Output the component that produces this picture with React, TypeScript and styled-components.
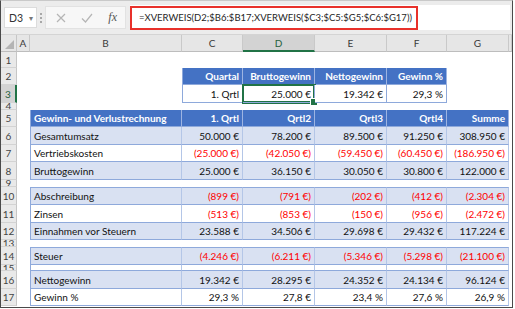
import { ReactElement } from "react";
import styled, { createGlobalStyle } from "styled-components";

type Tone = "head" | "band" | "plain";

type PlRow = {
  n: number;
  label: string;
  tone: Tone;
  values: string[];
  top?: boolean;
};

const COLUMNS = ["A", "B", "C", "D", "E", "F", "G"];
const ROW_HEIGHTS = [17, 16, 17, 18, 7, 17, 18, 17, 18, 7, 18, 18, 17, 7, 18, 6, 18, 17];
const FORMULA = "=XVERWEIS(D2;$B6:$B17;XVERWEIS($C3;$C5:$G5;$C6:$G17))";

const LOOKUP_HEAD = ["Quartal", "Bruttogewinn", "Nettogewinn", "Gewinn %"];
const LOOKUP_VALUES = ["1. Qrtl", "25.000 €", "19.342 €", "29,3 %"];

const PL_HEAD = ["Gewinn- und Verlustrechnung", "1. Qrtl", "Qrtl2", "Qrtl3", "Qrtl4", "Summe"];

// blank rows (4, 9, 13) are rendered as gaps between these
const PL_ROWS: PlRow[] = [
  { n: 6, label: "Gesamtumsatz", tone: "band", values: ["50.000 €", "78.200 €", "89.500 €", "91.250 €", "308.950 €"] },
  { n: 7, label: "Vertriebskosten", tone: "plain", values: ["(25.000 €)", "(42.050 €)", "(59.450 €)", "(60.450 €)", "(186.950 €)"] },
  { n: 8, label: "Bruttogewinn", tone: "band", values: ["25.000 €", "36.150 €", "30.050 €", "30.800 €", "122.000 €"] },
  { n: 10, label: "Abschreibung", tone: "band", top: true, values: ["(899 €)", "(791 €)", "(202 €)", "(412 €)", "(2.304 €)"] },
  { n: 11, label: "Zinsen", tone: "plain", values: ["(513 €)", "(853 €)", "(150 €)", "(956 €)", "(2.472 €)"] },
  { n: 12, label: "Einnahmen vor Steuern", tone: "band", values: ["23.588 €", "34.506 €", "29.698 €", "29.432 €", "117.224 €"] },
  { n: 14, label: "Steuer", tone: "band", top: true, values: ["(4.246 €)", "(6.211 €)", "(5.346 €)", "(5.298 €)", "(21.100 €)"] },
  { n: 15, label: "", tone: "plain", values: ["", "", "", "", ""] },
  { n: 16, label: "Nettogewinn", tone: "band", values: ["19.342 €", "28.295 €", "24.352 €", "24.134 €", "96.124 €"] },
  { n: 17, label: "Gewinn %", tone: "plain", values: ["29,3 %", "27,8 €", "23,4 %", "27,6 %", "26,9 %"] },
];

const GAP_BEFORE: Record<number, number> = { 10: 9, 14: 13 };

export default function App(): ReactElement {
  return (
    <>
      <GlobalStyle />
      <Frame>
        <FormulaBar>
          <NameBox>
            D3
            <Caret>▾</Caret>
          </NameBox>
          <Grip />
          <FxBox>
            <svg width="10" height="10" viewBox="0 0 10 10">
              <path d="M1 1 L9 9 M9 1 L1 9" stroke="#b5b5b5" strokeWidth="1.2" fill="none" />
            </svg>
            <svg width="12" height="10" viewBox="0 0 12 10">
              <path d="M1 5.5 L4.5 9 L11 1" stroke="#b5b5b5" strokeWidth="1.2" fill="none" />
            </svg>
            <Fx>fx</Fx>
          </FxBox>
          <FormulaInput>
            <Highlight>{FORMULA}</Highlight>
          </FormulaInput>
        </FormulaBar>

        <Sheet>
          <Corner />
          {COLUMNS.map((c) => (
            <ColHead key={c} $active={c === "D"}>
              {c}
            </ColHead>
          ))}
          <ColHead $active={false} />

          <RowHead $active={false}>1</RowHead>
          <Blank $from={2} />

          <RowHead $active={false}>2</RowHead>
          <Blank $from={2} $to={4} />
          {LOOKUP_HEAD.map((h, i) => (
            <Cell key={h} $tone="head" $align="right" $first={i === 0}>
              {h}
            </Cell>
          ))}
          <Blank $from={8} />

          <RowHead $active>3</RowHead>
          <Blank $from={2} $to={4} />
          {LOOKUP_VALUES.map((v, i) => (
            <LookupCell key={v} $selected={i === 1} $first={i === 0}>
              {v}
            </LookupCell>
          ))}
          <Blank $from={8} />

          <RowHead $active={false}>4</RowHead>
          <Blank $from={2} />

          <RowHead $active={false}>5</RowHead>
          <Blank $from={2} $to={3} />
          {PL_HEAD.map((h, i) => (
            <Cell key={h} $tone="head" $align={i === 0 ? "left" : "right"} $first={i === 0}>
              {h}
            </Cell>
          ))}
          <Blank $from={9} />

          {PL_ROWS.map((row) => (
            <PlLine key={row.n} row={row} />
          ))}
        </Sheet>
      </Frame>
    </>
  );
}

function PlLine({ row }: { row: PlRow }): ReactElement {
  const gap = GAP_BEFORE[row.n];
  return (
    <>
      {gap && (
        <>
          <RowHead $active={false}>{gap}</RowHead>
          <Blank $from={2} />
        </>
      )}
      <RowHead $active={false}>{row.n}</RowHead>
      <Blank $from={2} $to={3} />
      <Cell $tone={row.tone} $align="left" $first $top={row.top}>
        {row.label}
      </Cell>
      {row.values.map((v, i) => (
        <Cell key={i} $tone={row.tone} $align="right" $neg={v.startsWith("(")} $top={row.top}>
          {v}
        </Cell>
      ))}
      <Blank $from={9} />
    </>
  );
}

const GlobalStyle = createGlobalStyle`
  * { box-sizing: border-box; }
  body {
    margin: 0;
    background: #ffffff;
    font-family: Lato, "Open Sans", sans-serif;
  }
`;

const Frame = styled.div`
  width: 513px;
  height: 308px;
  overflow: hidden;
  border: 1px solid #4a4a4a;
  border-top-color: #c9c9c9;
  background: #ffffff;
`;

const FormulaBar = styled.div`
  height: 34px;
  display: flex;
  align-items: center;
  padding: 0 2px 0 3px;
  background: #ececec;
  border-bottom: 1px solid #d4d4d4;
`;

const NameBox = styled.div`
  width: 33px;
  height: 21px;
  display: flex;
  align-items: center;
  justify-content: space-between;
  padding: 0 3px 0 4px;
  background: #ffffff;
  border: 1px solid #dcdcdc;
  font-size: 10.5px;
  color: #333333;
`;

const Caret = styled.span`
  font-size: 8px;
  color: #777777;
`;

const Grip = styled.span`
  width: 2px;
  height: 2px;
  margin: -8px 3px 0 3px;
  background: #a8a8a8;
  box-shadow: 0 4px #a8a8a8, 0 8px #a8a8a8;
`;

const FxBox = styled.div`
  width: 81px;
  height: 23px;
  display: flex;
  align-items: center;
  justify-content: space-between;
  padding: 0 8px 0 10px;
  background: #f7f7f7;
  border: 1px solid #e2e2e2;
`;

const Fx = styled.span`
  font-family: "Liberation Serif", serif;
  font-style: italic;
  font-size: 12px;
  color: #555555;
`;

const FormulaInput = styled.div`
  flex: 1;
  height: 25px;
  margin-left: 4px;
  display: flex;
  align-items: center;
  background: #ffffff;
`;

const Highlight = styled.div`
  width: 288px;
  height: 24px;
  display: flex;
  align-items: center;
  padding: 0 6px 0 7px;
  border: 2px solid #e8312b;
  font-size: 9.5px;
  color: #1e1e1e;
  white-space: nowrap;
`;

const Sheet = styled.div`
  display: grid;
  grid-template-columns: 16px 13px 152px 61px 72px 72px 60px 62px 3px;
  grid-template-rows: ${ROW_HEIGHTS.map((h) => `${h}px`).join(" ")};
  font-size: 10px;
`;

const Corner = styled.div`
  position: relative;
  background: #e6e6e6;
  border-right: 1px solid #c6c6c6;
  border-bottom: 1px solid #bdbdbd;

  &::after {
    content: "";
    position: absolute;
    right: 2px;
    bottom: 2px;
    border-style: solid;
    border-width: 0 0 9px 9px;
    border-color: transparent transparent #b4b4b4 transparent;
  }
`;

const ColHead = styled.div<{ $active: boolean }>`
  display: flex;
  align-items: center;
  justify-content: center;
  background: ${(p) => (p.$active ? "#d3d3d3" : "#e6e6e6")};
  border-right: 1px solid #c9c9c9;
  border-bottom: ${(p) => (p.$active ? "2px solid #217346" : "1px solid #bdbdbd")};
  font-size: 10px;
  color: ${(p) => (p.$active ? "#1f5f3c" : "#3a3a3a")};
`;

const RowHead = styled.div<{ $active: boolean }>`
  display: flex;
  align-items: center;
  justify-content: center;
  overflow: hidden;
  background: ${(p) => (p.$active ? "#d3d3d3" : "#e9e9e9")};
  border-right: ${(p) => (p.$active ? "2px solid #217346" : "1px solid #c6c6c6")};
  border-bottom: 1px solid #d3d3d3;
  font-size: 10px;
  color: ${(p) => (p.$active ? "#1f5f3c" : "#444444")};
`;

const Blank = styled.div<{ $from: number; $to?: number }>`
  grid-column: ${(p) => `${p.$from} / ${p.$to ?? -1}`};
`;

const Cell = styled.div<{
  $tone: Tone;
  $align: "left" | "right";
  $neg?: boolean;
  $first?: boolean;
  $top?: boolean;
}>`
  display: flex;
  align-items: center;
  justify-content: ${(p) => (p.$align === "left" ? "flex-start" : "flex-end")};
  padding: 0 3px;
  overflow: hidden;
  white-space: nowrap;
  background: ${(p) => (p.$tone === "head" ? "#4472c4" : p.$tone === "band" ? "#d9e1f2" : "#ffffff")};
  color: ${(p) => (p.$tone === "head" ? "#ffffff" : p.$neg ? "#ff0000" : "#111111")};
  font-weight: ${(p) => (p.$tone === "head" ? 700 : 400)};
  border-right: 1px solid ${(p) => (p.$tone === "head" ? "#9db4e2" : "#b4c6e7")};
  border-bottom: 1px solid #8ea9db;
  border-left: ${(p) => (p.$first ? "1px solid #8ea9db" : "none")};
  border-top: ${(p) => (p.$top ? "1px solid #8ea9db" : "none")};
`;

const LookupCell = styled.div<{ $selected: boolean; $first: boolean }>`
  position: relative;
  display: flex;
  align-items: center;
  justify-content: flex-end;
  padding: 0 3px;
  white-space: nowrap;
  background: #ffffff;
  color: #111111;
  border-right: 1px solid #8ea9db;
  border-bottom: 1px solid #8ea9db;
  border-left: ${(p) => (p.$first ? "1px solid #8ea9db" : "none")};
  box-shadow: ${(p) => (p.$selected ? "0 0 0 1px #217346, inset 0 0 0 1px #217346" : "none")};

  &::after {
    content: "";
    display: ${(p) => (p.$selected ? "block" : "none")};
    position: absolute;
    right: -4px;
    bottom: -4px;
    width: 6px;
    height: 6px;
    background: #217346;
    border: 1px solid #ffffff;
  }
`;
